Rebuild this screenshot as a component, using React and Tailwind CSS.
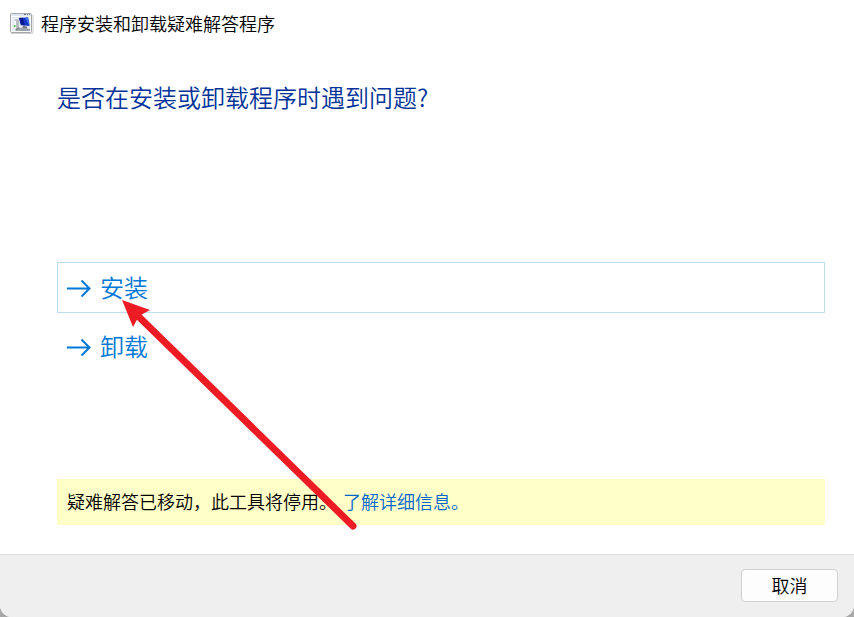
const options = [
    { name: "安装", active: true },
    { name: "卸载", active: false }
]

const TroubleshooterIcon = () => {
    return <svg className="w-6 h-6 shrink-0" viewBox="0 0 24 24" fill="none" aria-hidden="true">
        <path d="M1 22.500h22V4" stroke="#d0d0d0" strokeWidth="1" />
        <rect x="0.5" y="2.5" width="21" height="19" rx="1" fill="#fafbfc" stroke="#a3a6ab" />
        <path d="M1 3h20v2H1z" fill="#dfe5ee" />
        <path d="M14 3h2v1h-2zM17 3h1v1h-1zM19 3h1v1h-1z" fill="#6c7480" />
        <path d="M2 6h18v14H2z" fill="#e6ebf1" />
        <path d="M4 9l3-1 2 1v9l-3 1-2-1z" fill="#b9bec4" />
        <path d="M4 9l2 1v9l-2-1z" fill="#f4f5f6" />
        <path d="M4 14h1.500v2H4z" fill="#42c83c" />
        <path d="M8 6l11-.5 1.500 10L10 15z" fill="#d7dbe2" />
        <path d="M9 7l9-.5 1.500 8.500L11 14z" fill="#1636c8" />
        <path d="M9 7l4-.2 2 7.600L11 14z" fill="#0a1a94" />
        <path d="M15 6.700l3-.2 1.500 8z" fill="#3f6cec" />
        <path d="M13 15l4 .5v2h-5z" fill="#70777f" />
        <path d="M9 18l3-1.500 8 1.500v2H8z" fill="#9da2a9" />
        <path d="M5 19l4-3 1 1-3 3z" fill="#7b828a" />
    </svg>
}

const ArrowIcon = () => {
    return <svg className="w-6 h-6 shrink-0" viewBox="0 0 24 24" fill="none" aria-hidden="true">
        <path d="M0 12.500h22.500M14.500 4.500l8 8-8 8" stroke="currentColor" strokeWidth="2" />
    </svg>
}

// red arrow drawn over the dialog, pointing at the first option
const Pointer = () => {
    return <svg className="absolute left-[122px] top-[300px] w-[236px] h-[231px] pointer-events-none" viewBox="0 0 236 231" fill="none" aria-hidden="true">
        <path d="M15 15L231 226" stroke="#ed1c24" strokeWidth="7" strokeLinecap="round" />
        <path d="M0 0L28 10L17 16L11 27z" fill="#ed1c24" />
    </svg>
}

const App = () => {
    return <div className="min-h-screen bg-[#a8a8a8] flex flex-col font-['Noto_Sans_CJK_SC',sans-serif] text-lg font-[350] text-black">
        <div className="relative grow flex flex-col bg-white rounded-b-xl overflow-hidden">
            <header className="flex items-center gap-[7px] h-[45px] pl-2.5">
                <TroubleshooterIcon />
                <span>程序安装和卸载疑难解答程序</span>
            </header>
            <main className="grow flex flex-col pl-[57px] pr-[29px] pt-9">
                <h1 className="text-2xl text-[#003399]">是否在安装或卸载程序时遇到问题?</h1>
                <div className="flex flex-col gap-2 mt-[149px]">
                    {options.map((option) => (
                        <button
                            key={option.name}
                            type="button"
                            className={`flex items-center gap-[9px] w-full h-[51px] pl-[9px] border text-2xl text-[#0078d7] cursor-pointer ${option.active ? "border-[#bcdcf0]" : "border-transparent"}`}
                        >
                            <ArrowIcon />
                            <span className="pb-0.5">{option.name}</span>
                        </button>
                    ))}
                </div>
                <p className="flex items-center gap-1.5 h-[46px] mt-auto mb-[29px] pl-2.5 pb-0.5 bg-[#ffffc8]">
                    <span>疑难解答已移动，此工具将停用。</span>
                    <a href="#" className="text-[#0066cc]">了解详细信息。</a>
                </p>
            </main>
            <footer className="flex justify-end items-start h-[63px] pt-3.5 pr-4 bg-[#efefef] border-t border-[#dcdcdc]">
                <button type="button" className="w-[97px] h-[33px] pb-0.5 flex justify-center items-center bg-[#fdfdfd] border border-[#d0d0d0] rounded cursor-pointer">
                    取消
                </button>
            </footer>
            <Pointer />
        </div>
    </div>
};

export default App;
